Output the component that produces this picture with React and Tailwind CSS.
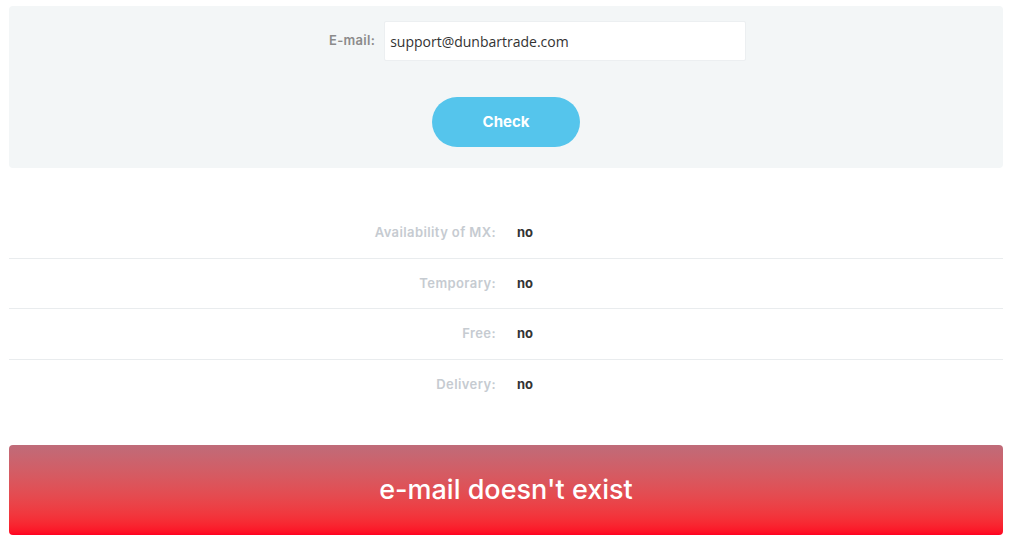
export default function App() {
  const rows = [
    ["Availability of MX:", "no", "h-[50px]"],
    ["Temporary:", "no", "h-[50px] border-t border-[#e9ecee]"],
    ["Free:", "no", "h-[51px] border-t border-[#e9ecee]"],
    ["Delivery:", "no", "h-[50px] border-t border-[#e9ecee]"],
  ];

  return (
    <div className="min-h-[542px] bg-white px-[9px] pt-[6px] font-['Inter',sans-serif]">
      <div className="flex flex-col items-center rounded-[4px] bg-[#f3f6f7] pt-[15px] pb-[21px]">
        <div className="ml-[320px] flex items-center gap-[9px] self-start">
          <label className="text-[13px] font-semibold tracking-[0.3px] text-[#8b8b8b]">E-mail:</label>
          <input
            type="text"
            defaultValue="support@dunbartrade.com"
            className="h-[40px] w-[362px] rounded-[2px] border border-[#eceff1] bg-white px-[5px] text-[14px] text-[#333] outline-none font-['Open_Sans',sans-serif]"
          />
        </div>
        <button className="mt-[36px] h-[50px] w-[148px] rounded-full bg-[#55c5ec] text-[15px] font-bold text-white">
          Check
        </button>
      </div>

      <div className="mt-[40px]">
        {rows.map(([label, value, cls]) => (
          <div key={label} className={"grid grid-cols-2 items-center " + cls}>
            <div className="pr-[10px] text-right text-[13px] font-semibold tracking-[0.4px] text-[#c6cbd1]">
              {label}
            </div>
            <div className="pl-[11px] text-[13px] font-bold text-[#333]">{value}</div>
          </div>
        ))}
      </div>

      <div className="mt-[36px] flex h-[90px] items-center justify-center rounded-[4px] bg-gradient-to-b from-[#bf6b79] to-[#ff0020]">
        <span className="text-[27px] font-medium text-white">e-mail doesn't exist</span>
      </div>
    </div>
  );
}
